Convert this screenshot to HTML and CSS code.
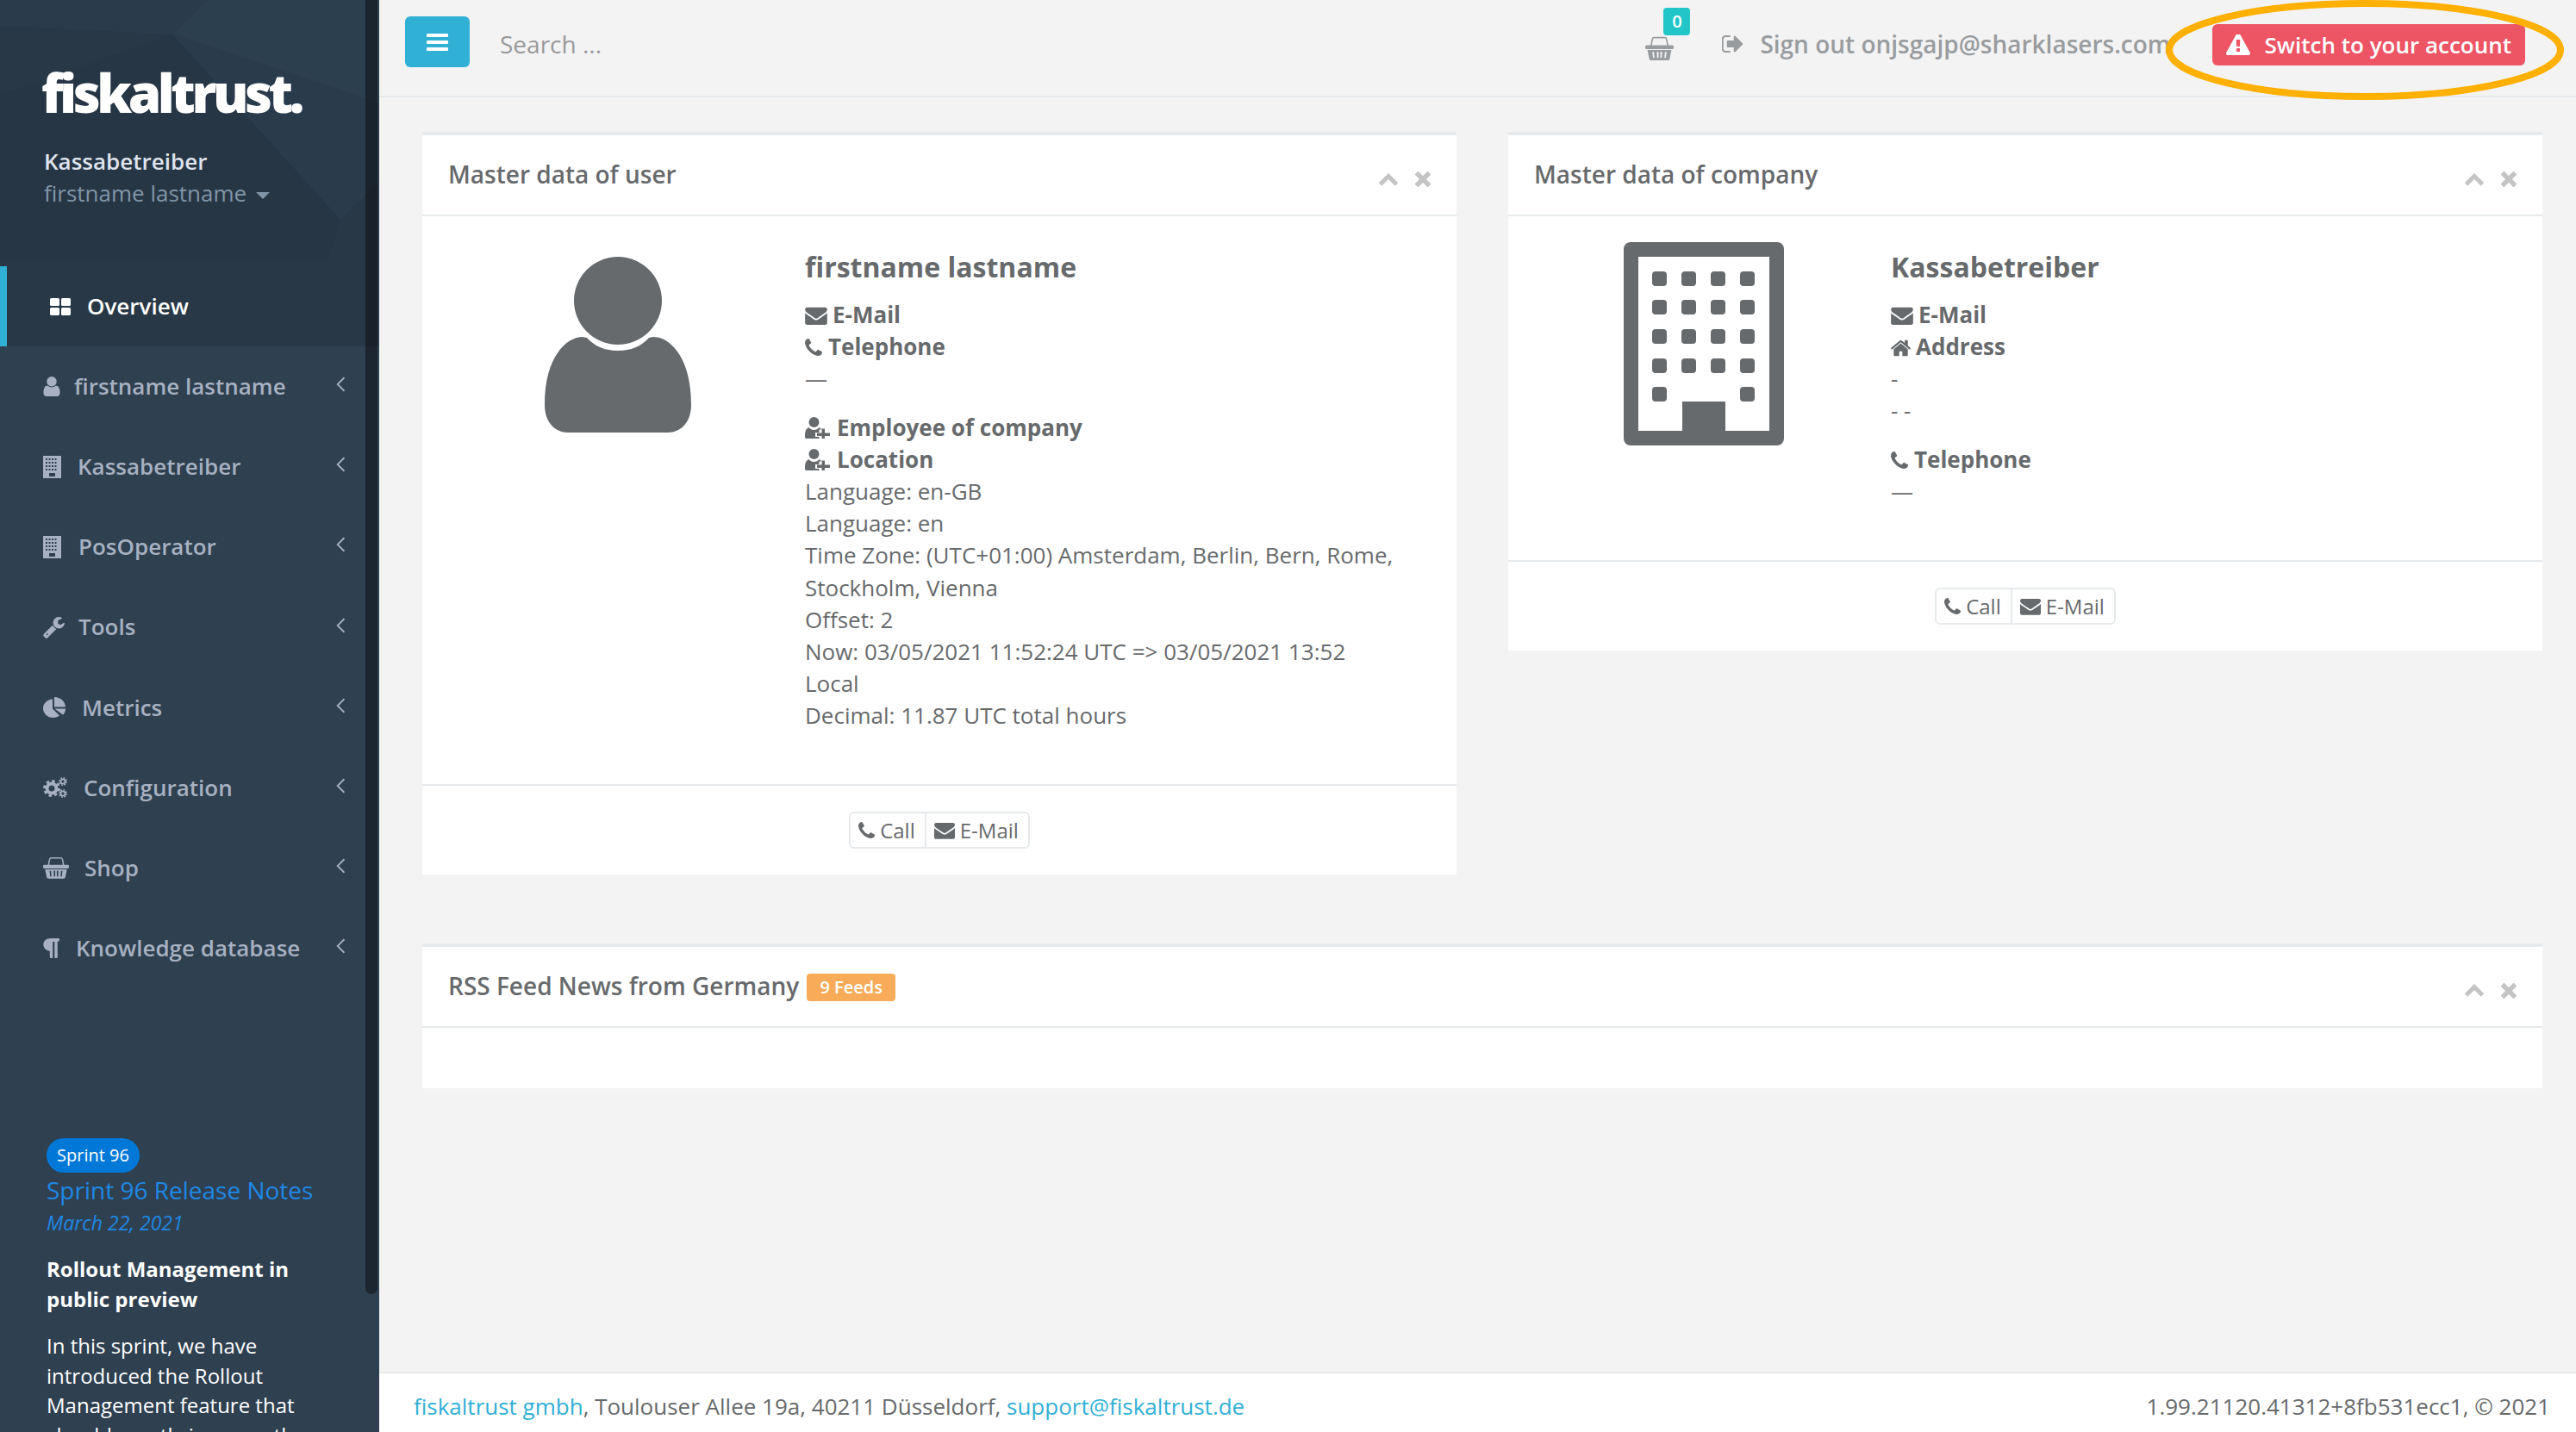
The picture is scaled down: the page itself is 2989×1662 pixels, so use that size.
FILE: index.html
```html
<!DOCTYPE html>
<html lang="en">
<head>
  <meta charset="UTF-8" />
  <title>fiskaltrust portal</title>
  <link rel="stylesheet" href="styles.css">
</head>
<body>
  <svg class="sprite" xmlns="http://www.w3.org/2000/svg">
    <symbol id="i-envelope" viewBox="0 128 1792 1536"><path d="M1792 710v794q0 66-47 113t-113 47h-1472q-66 0-113-47t-47-113v-794q44 49 101 87 362 246 497 345 57 42 92.5 65.5t94.5 48 110 24.5h2q51 0 110-24.5t94.5-48 92.5-65.5q170-123 498-345 57-39 100-87zm0-294q0 79-49 151t-122 123q-376 261-468 325-10 7-42.5 30.5t-54 38-52 32.5-57.5 27-50 9h-2q-23 0-50-9t-57.5-27-52-32.5-54-38-42.5-30.5q-91-64-262-182.5t-205-142.5q-62-42-117-115.5t-55-136.5q0-78 41.5-130t118.5-52h1472q65 0 112.5 47t47.5 113z"/></symbol>
    <symbol id="i-phone" viewBox="192 128 1408 1408"><path d="M1600 1240q0 27-10 70.5t-21 68.5q-21 50-122 106-94 51-186 51-27 0-53-3.5t-57.5-12.5-47-14.5-55.5-20.5-49-18q-98-35-175-83-127-79-264-216t-216-264q-48-77-83-175-3-9-18-49t-20.5-55.5-14.5-47-12.5-57.5-3.5-53q0-92 51-186 56-101 106-122 25-11 68.5-21t70.5-10q14 0 21 3 18 6 53 76 11 19 30 54t35 63.5 31 53.5q3 4 17.5 25t21.5 35.5 7 28.5q0 20-28.5 50t-62 55-62 53-28.5 46q0 9 5 22.5t8.5 20.5 14 24 11.5 19q76 137 174 235t235 174q2 1 19 11.5t24 14 20.5 8.5 22.5 5q18 0 46-28.5t53-62 55-62 50-28.5q14 0 28.5 7t35.5 21.5 25 17.5q25 15 53.5 31t63.5 35 54 30q70 35 76 53 3 7 3 21z"/></symbol>
    <symbol id="i-user" viewBox="256 128 1280 1536"><path d="M1536 1399q0 109-62.5 187t-150.5 78h-854q-88 0-150.5-78t-62.5-187q0-85 8.5-160.5t31.5-152 58.5-131 94-89 134.5-34.5q131 128 313 128t313-128q76 0 134.5 34.5t94 89 58.5 131 31.5 152 8.5 160.5zm-256-887q0 159-112.5 271.5t-271.5 112.5-271.5-112.5-112.5-271.5 112.5-271.5 271.5-112.5 271.5 112.5 112.5 271.5z"/></symbol>
    <symbol id="i-userplus" viewBox="0 0 58 50"><circle cx="21" cy="12" r="12"/><path d="M3 50c-3 0-3-3-3-6 0-10 2-17 9-20 3 4 7 6 12 6s9-2 12-6c2 1 4 3 5 5h-5v7h-9v10h9v4z"/><path d="M39 27h7v10h12v7H46v6h-7v-6H28v-7h11z"/></symbol>
    <symbol id="i-th" viewBox="0 0 24 20"><rect width="11" height="9" rx="1.5"/><rect x="13" width="11" height="9" rx="1.5"/><rect y="11" width="11" height="9" rx="1.5"/><rect x="13" y="11" width="11" height="9" rx="1.5"/></symbol>
    <symbol id="i-building" viewBox="0 0 21 26"><path fill-rule="evenodd" d="M0 0h21v26H0zM3 3v2h2V3zm3.500 0v2h2V3zm3.500 0v2h2V3zm3.500 0v2h2V3zM3 7v2h2V7zm3.500 0v2h2V7zm3.500 0v2h2V7zm3.500 0v2h2V7zM3 11v2h2v-2zm3.500 0v2h2v-2zm3.500 0v2h2v-2zm3.500 0v2h2v-2zM3 15v2h2v-2zm3.500 0v2h2v-2zm3.500 0v2h2v-2zm3.500 0v2h2v-2zM7 20v4h7v-4z"/></symbol>
    <symbol id="i-wrench" viewBox="64 128 1664 1664"><path d="M448 1472q0-26-19-45t-45-19-45 19-19 45 19 45 45 19 45-19 19-45zm644-420l-682 682q-37 37-90 37-52 0-91-37l-106-108q-38-36-38-90 0-53 38-91l681-681q39 98 114.5 173.5t173.5 114.5zm634-435q0 39-23 106-47 134-164.5 217.5t-258.5 83.5q-185 0-316.5-131.5t-131.5-316.5 131.5-316.5 316.5-131.5q58 0 121.5 16.5t107.5 46.5q16 11 16 28t-16 28l-293 169v224l193 107q5-3 79-48.5t135.5-81 70.5-35.5q15 0 23.5 10t8.5 25z"/></symbol>
    <symbol id="i-pie" viewBox="0 0 26 24"><path d="M11 2.500v11l8 8C17 23 14.500 24 11.500 24 5 24 0 19 0 13 0 7.500 5 2.800 11 2.500z"/><path d="M13.500 13.500H26c0 2.800-1 5.200-2.800 7.200z"/><path d="M13 0c7 0 12.600 5 13 11.500H13z"/></symbol>
    <symbol id="i-cogs" viewBox="0 0 28 24">
      <circle cx="10" cy="13" r="5.500" fill="none" stroke="currentColor" stroke-width="4"/>
      <circle cx="10" cy="13" r="8.500" fill="none" stroke="currentColor" stroke-width="3" stroke-dasharray="3.400 3.270"/>
      <circle cx="23" cy="5" r="2.600" fill="none" stroke="currentColor" stroke-width="1.800"/>
      <circle cx="23" cy="5" r="4.200" fill="none" stroke="currentColor" stroke-width="1.500" stroke-dasharray="1.700 1.600"/>
      <circle cx="23" cy="19" r="2.600" fill="none" stroke="currentColor" stroke-width="1.800"/>
      <circle cx="23" cy="19" r="4.200" fill="none" stroke="currentColor" stroke-width="1.500" stroke-dasharray="1.700 1.600"/>
    </symbol>
    <symbol id="i-basket" viewBox="0 0 32 27">
      <path d="M6.500 11 8 3.500Q8.300 1.500 10 1.500h12q1.700 0 2 2L25.500 11" fill="none" stroke="currentColor" stroke-width="1.600"/>
      <rect y="10" width="32" height="4.500" rx="1.500"/>
      <path fill-rule="evenodd" d="M2.500 15.500h27l-2 10q-.3 1.500-2 1.500h-19q-1.700 0-2-1.500zM8 17.500l.8 7h1.600l-.6-7zm5 0 .4 7H15v-7zm4 0v7h1.600l.4-7zm5.200 0-.6 7h1.600l.8-7z"/>
    </symbol>
    <symbol id="i-para" viewBox="256 128 1280 1536"><path d="M1534 189v73q0 29-18.500 61t-42.500 32q-50 0-54 1-26 6-32 31-3 11-3 64v1152q0 25-18 43t-43 18h-108q-25 0-43-18t-18-43v-1218h-143v1218q0 25-17.500 43t-43.500 18h-108q-26 0-43.500-18t-17.500-43v-496q-147-12-245-59-126-58-192-179-64-117-64-259 0-166 88-286 88-118 209-159 111-37 417-37h479q25 0 43 18t18 43z"/></symbol>
    <symbol id="i-home" viewBox="90 256 1610 1280"><path d="M1472 992v480q0 26-19 45t-45 19h-384v-384h-256v384h-384q-26 0-45-19t-19-45v-480q0-1 .5-3t.5-3l575-474 575 474q1 2 1 6zm223-69l-62 74q-8 9-21 11h-3q-13 0-21-7l-692-577-692 577q-12 8-24 7-13-2-21-11l-62-74q-8-10-7-23.500t11-21.500l719-599q32-26 76-26t76 26l244 204v-195q0-14 9-23t23-9h192q14 0 23 9t9 23v408l219 182q10 8 11 21.500t-7 23.500z"/></symbol>
    <symbol id="i-signout" viewBox="128 256 1504 1280"><path d="M704 1440q0 4 1 20t.5 26.500-3 23.500-10 19.500-20.500 6.500h-320q-119 0-203.500-84.500t-84.500-203.500v-704q0-119 84.500-203.500t203.500-84.500h320q13 0 22.500 9.500t9.500 22.500q0 4 1 20t.5 26.500-3 23.500-10 19.500-20.500 6.500h-320q-66 0-113 47t-47 113v704q0 66 47 113t113 47h312l11.500 1 11.500 3 8 5.500 7 9 2 13.500zm928-544q0 26-19 45l-544 544q-19 19-45 19t-45-19-19-45v-288h-448q-26 0-45-19t-19-45v-384q0-26 19-45t45-19h448v-288q0-26 19-45t45-19 45 19l544 544q19 19 19 45z"/></symbol>
    <symbol id="i-warning" viewBox="0 0 1792 1536"><path transform="translate(0 -128)" d="M1024 1375v-190q0-14-9.500-23.500t-22.500-9.500h-192q-13 0-22.500 9.500t-9.500 23.500v190q0 14 9.500 23.500t22.500 9.500h192q13 0 22.500-9.500t9.500-23.500zm-2-374l18-459q0-12-10-19-13-11-24-11h-220q-11 0-24 11-10 7-10 21l17 457q0 10 10 16.500t24 6.500h185q14 0 23.500-6.500t10.500-16.500zm-14-934l768 1408q35 63-2 126-17 29-46.500 46t-63.500 17h-1536q-34 0-63.500-17t-46.500-46q-37-63-2-126l768-1408q17-31 47-49t65-18 65 18 47 49z"/></symbol>
    <symbol id="i-angle" viewBox="0 0 9 16"><path d="M8.500 1 1.500 8l7 7" fill="none" stroke="currentColor" stroke-width="1.600"/></symbol>
    <symbol id="i-up" viewBox="0 0 24 15"><path d="M2.500 13 12 3.500l9.500 9.500" fill="none" stroke="currentColor" stroke-width="5"/></symbol>
    <symbol id="i-times" viewBox="0 0 18 18"><path d="M1.500 1.500l15 15m0-15l-15 15" fill="none" stroke="currentColor" stroke-width="5.500"/></symbol>
  </svg>

  <div class="app">
    <aside class="sidebar">
      <div class="profile">
        <svg class="profile-bg" viewBox="0 0 440 303" preserveAspectRatio="none" aria-hidden="true">
          <polygon points="200,40 240,0 440,0 440,120" fill="#2c3f4f"/>
          <polygon points="200,40 395,255 440,210 440,120" fill="#2a3b4b"/>
          <polygon points="0,110 200,40 395,255 380,303 0,303" fill="#273645"/>
          <polygon points="0,0 240,0 200,40 0,30" fill="#2a3b4b"/>
        </svg>
        <div class="logo">fiskaltrust.</div>
        <div class="profile-name">Kassabetreiber</div>
        <div class="profile-user">firstname lastname <span class="caret"></span></div>
      </div>

      <ul class="nav">
        <li class="nav-item active"><svg class="nav-icon" width="24" height="20"><use href="#i-th"/></svg>Overview</li>
        <li class="nav-item"><svg class="nav-icon" width="20" height="23"><use href="#i-user"/></svg>firstname lastname<svg class="nav-arrow" width="10" height="18"><use href="#i-angle"/></svg></li>
        <li class="nav-item"><svg class="nav-icon" width="21" height="26"><use href="#i-building"/></svg><span class="t-b">Kassabetreiber</span><svg class="nav-arrow" width="10" height="18"><use href="#i-angle"/></svg></li>
        <li class="nav-item"><svg class="nav-icon" width="21" height="26"><use href="#i-building"/></svg><span class="t-p">PosOperator</span><svg class="nav-arrow" width="10" height="18"><use href="#i-angle"/></svg></li>
        <li class="nav-item"><svg class="nav-icon" width="25" height="25"><use href="#i-wrench"/></svg>Tools<svg class="nav-arrow" width="10" height="18"><use href="#i-angle"/></svg></li>
        <li class="nav-item"><svg class="nav-icon" width="26" height="24"><use href="#i-pie"/></svg><span class="t-m">Metrics</span><svg class="nav-arrow" width="10" height="18"><use href="#i-angle"/></svg></li>
        <li class="nav-item"><svg class="nav-icon" width="28" height="24"><use href="#i-cogs"/></svg><span class="t-c">Configuration</span><svg class="nav-arrow" width="10" height="18"><use href="#i-angle"/></svg></li>
        <li class="nav-item"><svg class="nav-icon" width="30" height="26"><use href="#i-basket"/></svg><span class="t-s">Shop</span><svg class="nav-arrow" width="10" height="18"><use href="#i-angle"/></svg></li>
        <li class="nav-item"><svg class="nav-icon" width="19" height="23"><use href="#i-para"/></svg><span class="t-k">Knowledge database</span><svg class="nav-arrow" width="10" height="18"><use href="#i-angle"/></svg></li>
      </ul>

      <section class="news">
        <span class="news-tag">Sprint 96</span>
        <a class="news-title">Sprint 96 Release Notes</a>
        <div class="news-date">March 22, 2021</div>
        <h4 class="news-head">Rollout Management in public preview</h4>
        <p class="news-text">In this sprint, we have introduced the Rollout Management feature that should greatly improve the</p>
      </section>

      <div class="scroll-thumb"></div>
    </aside>

    <div class="page">
      <header class="topbar">
        <button class="menu-btn" type="button"><span></span><span></span><span></span></button>
        <div class="search">Search ...</div>
        <div class="top-links">
          <div class="cart">
            <svg width="33" height="28"><use href="#i-basket"/></svg>
            <span class="cart-count">0</span>
          </div>
          <a class="sign-out"><svg width="25" height="20"><use href="#i-signout"/></svg>Sign out onjsgajp@sharklasers.com</a>
          <button class="switch-btn" type="button"><svg width="28" height="24"><use href="#i-warning"/></svg>Switch to your account</button>
        </div>
        <svg class="highlight" width="464" height="118" aria-hidden="true"><ellipse cx="232" cy="59" rx="227" ry="54" fill="none" stroke="#ffb000" stroke-width="8"/></svg>
      </header>

      <main class="content">
        <div class="row">
          <section class="ibox">
            <div class="ibox-title">
              <h5>Master data of user</h5>
              <div class="ibox-tools">
                <svg width="24" height="15"><use href="#i-up"/></svg>
                <svg width="18" height="18"><use href="#i-times"/></svg>
              </div>
            </div>
            <div class="ibox-content">
              <div class="figure">
                <svg class="avatar" viewBox="0 0 170 204" width="170" height="204">
                  <ellipse cx="85" cy="51" rx="51" ry="51"/>
                  <path d="M44 93C26 93 0 115 0 172c0 20 12 32 27 32h116c15 0 27-12 27-32 0-57-26-79-44-79l-5 1c-9 10-21 15-36 15s-27-5-36-15z"/>
                </svg>
              </div>
              <div class="details">
                <h3>firstname lastname</h3>
                <p>
                  <b><svg class="ic" width="26" height="22"><use href="#i-envelope"/></svg>E-Mail</b><br>
                  <b><svg class="ic ic-phone" width="20" height="20"><use href="#i-phone"/></svg>Telephone</b><br>
                  —
                </p>
                <p>
                  <b><svg class="ic ic-plus" width="29" height="25"><use href="#i-userplus"/></svg>Employee of company</b><br>
                  <b><svg class="ic ic-plus" width="29" height="25"><use href="#i-userplus"/></svg>Location</b><br>
                  Language: en-GB<br>
                  Language: en<br>
                  Time Zone: (UTC+01:00) Amsterdam, Berlin, Bern, Rome, Stockholm, Vienna<br>
                  Offset: 2<br>
                  Now: 03/05/2021 11:52:24 UTC =&gt; 03/05/2021 13:52 Local<br>
                  Decimal: 11.87 UTC total hours
                </p>
              </div>
            </div>
            <div class="ibox-footer">
              <div class="btn-group">
                <a class="btn"><svg width="19" height="19"><use href="#i-phone"/></svg>Call</a>
                <a class="btn"><svg width="24" height="21"><use href="#i-envelope"/></svg>E-Mail</a>
              </div>
            </div>
          </section>

          <section class="ibox">
            <div class="ibox-title">
              <h5>Master data of company</h5>
              <div class="ibox-tools">
                <svg width="24" height="15"><use href="#i-up"/></svg>
                <svg width="18" height="18"><use href="#i-times"/></svg>
              </div>
            </div>
            <div class="ibox-content">
              <div class="figure">
                <svg class="office" viewBox="0 0 186 236" width="186" height="236">
                  <path fill-rule="evenodd" d="M8 0h170a8 8 0 0 1 8 8v220a8 8 0 0 1-8 8H8a8 8 0 0 1-8-8V8a8 8 0 0 1 8-8zM17 17v202h51v-34h50v34h51V17z"/>
                  <rect x="33" y="34" width="17" height="17" rx="4"/><rect x="67" y="34" width="17" height="17" rx="4"/><rect x="101" y="34" width="17" height="17" rx="4"/><rect x="135" y="34" width="17" height="17" rx="4"/>
                  <rect x="33" y="67" width="17" height="17" rx="4"/><rect x="67" y="67" width="17" height="17" rx="4"/><rect x="101" y="67" width="17" height="17" rx="4"/><rect x="135" y="67" width="17" height="17" rx="4"/>
                  <rect x="33" y="101" width="17" height="17" rx="4"/><rect x="67" y="101" width="17" height="17" rx="4"/><rect x="101" y="101" width="17" height="17" rx="4"/><rect x="135" y="101" width="17" height="17" rx="4"/>
                  <rect x="33" y="135" width="17" height="17" rx="4"/><rect x="67" y="135" width="17" height="17" rx="4"/><rect x="101" y="135" width="17" height="17" rx="4"/><rect x="135" y="135" width="17" height="17" rx="4"/>
                  <rect x="33" y="168" width="17" height="17" rx="4"/><rect x="135" y="168" width="17" height="17" rx="4"/>
                </svg>
              </div>
              <div class="details">
                <h3>Kassabetreiber</h3>
                <p>
                  <b><svg class="ic" width="26" height="22"><use href="#i-envelope"/></svg>E-Mail</b><br>
                  <b><svg class="ic" width="23" height="20"><use href="#i-home"/></svg>Address</b><br>
                  -<br>
                  - -
                </p>
                <p>
                  <b><svg class="ic ic-phone" width="20" height="20"><use href="#i-phone"/></svg>Telephone</b><br>
                  —
                </p>
              </div>
            </div>
            <div class="ibox-footer">
              <div class="btn-group">
                <a class="btn"><svg width="19" height="19"><use href="#i-phone"/></svg>Call</a>
                <a class="btn"><svg width="24" height="21"><use href="#i-envelope"/></svg>E-Mail</a>
              </div>
            </div>
          </section>
        </div>

        <section class="ibox ibox-wide">
          <div class="ibox-title">
            <h5>RSS Feed News from Germany <span class="label-warning">9 Feeds</span></h5>
            <div class="ibox-tools">
              <svg width="24" height="15"><use href="#i-up"/></svg>
              <svg width="18" height="18"><use href="#i-times"/></svg>
            </div>
          </div>
          <div class="ibox-content ibox-empty"></div>
        </section>
      </main>

      <footer class="footer">
        <div><a>fiskaltrust gmbh</a>, Toulouser Allee 19a, 40211 Düsseldorf, <a>support@fiskaltrust.de</a></div>
        <div>1.99.21120.41312+8fb531ecc1, © 2021</div>
      </footer>
    </div>
  </div>
</body>
</html>
```

FILE: styles.css
```css
* {
  box-sizing: border-box;
}
html, body {
  margin: 0;
  padding: 0;
  height: 100%;
}
body {
  font-family: "Open Sans", "Liberation Sans", sans-serif;
  font-size: 26px;
  line-height: 1.42857;
  color: #676a6c;
  background-color: #f3f3f4;
  overflow: hidden;
}
svg {
  fill: currentColor;
}
.sprite {
  display: none;
}
.app {
  display: flex;
  height: 1662px;
}

/* sidebar */
.sidebar {
  position: relative;
  flex: 0 0 440px;
  background-color: #2f4050;
  overflow: hidden;
}
.profile {
  position: relative;
  height: 309px;
  padding: 74px 0 0 51px;
  background-color: #293846;
}
.profile-bg {
  position: absolute;
  top: 0;
  left: 0;
  width: 440px;
  height: 303px;
}
.logo, .profile-name, .profile-user {
  position: relative;
}
.logo {
  margin-left: -3px;
  font-size: 62px;
  font-weight: 800;
  line-height: 66px;
  letter-spacing: -4.5px;
  color: #fff;
}
.profile-name {
  margin-top: 29px;
  font-weight: 600;
  color: #dfe4ed;
}
.profile-user {
  color: #8095a8;
}
.caret {
  display: inline-block;
  margin-left: 4px;
  vertical-align: middle;
  border-top: 8px solid #8095a8;
  border-left: 8px solid transparent;
  border-right: 8px solid transparent;
}
.nav {
  list-style: none;
  margin: 0;
  padding: 0;
}
.nav-item {
  display: flex;
  align-items: center;
  height: 93.14px;
  padding: 0 40px 0 50px;
  font-weight: 600;
  color: #a7b1c2;
}
.nav-icon {
  flex: none;
  margin-right: 16px;
}
.nav-arrow {
  flex: none;
  margin-left: auto;
  margin-top: -5px;
}
.nav-item.active {
  background-color: #293846;
  border-left: 8px solid #31b0d5;
  color: #fff;
}
.nav-item.active .nav-icon {
  margin-right: 19px;
}
.t-b {
  margin-left: 3px;
}
.t-p {
  margin-left: 4px;
}
.t-m {
  margin-left: 3px;
}
.t-c {
  margin-left: 3px;
}
.t-s {
  margin-left: 2px;
}
.t-k {
  margin-left: 3px;
}
.news {
  margin-top: 174px;
  padding: 0 70px 0 54px;
  font-size: 24px;
  color: #fff;
}
.news-tag {
  display: block;
  width: 108px;
  height: 40px;
  border-radius: 20px;
  background-color: #0078d7;
  font-size: 20px;
  line-height: 40px;
  text-align: center;
}
.news-title {
  display: block;
  margin-top: 0;
  font-size: 28px;
  line-height: 40px;
  color: #1e88e5;
  white-space: nowrap;
}
.news-date {
  font-size: 23px;
  font-style: italic;
  line-height: 36px;
  color: #1e88e5;
}
.news-head {
  margin: 18px 0 0;
  font-size: 24px;
  font-weight: 700;
  line-height: 35px;
}
.news-text {
  margin: 20px 0 0;
  line-height: 34.5px;
}
.scroll-thumb {
  position: absolute;
  top: 0;
  right: 2px;
  width: 14px;
  height: 1502px;
  border-radius: 0 0 7px 7px;
  background-color: rgba(0, 0, 0, 0.4);
}

/* top bar */
.page {
  flex: 1;
  display: flex;
  flex-direction: column;
  min-width: 0;
}
.topbar {
  position: relative;
  display: flex;
  align-items: center;
  flex: none;
  height: 113px;
  padding: 0 59px 8px 30px;
  border-bottom: 2px solid #e7eaec;
}
.menu-btn {
  display: flex;
  flex-direction: column;
  justify-content: center;
  gap: 4px;
  width: 75px;
  height: 59px;
  margin-bottom: 6px;
  padding: 0 25px;
  border: none;
  border-radius: 6px;
  background-color: #31b0d5;
}
.menu-btn span {
  display: block;
  height: 4px;
  border-radius: 1px;
  background-color: #fff;
}
.search {
  margin-left: 35px;
  font-size: 28px;
  color: #999;
}
.top-links {
  display: flex;
  align-items: center;
  margin-left: auto;
}
.cart {
  position: relative;
  display: flex;
  margin-top: 8px;
  color: #999c9e;
}
.cart-count {
  position: absolute;
  top: -33px;
  left: 21px;
  width: 31px;
  height: 32px;
  border-radius: 4px;
  background-color: #23c6c8;
  color: #fff;
  font-size: 20px;
  font-weight: 600;
  line-height: 32px;
  text-align: center;
}
.sign-out {
  display: flex;
  align-items: center;
  margin-left: 56px;
  font-size: 28px;
  font-weight: 600;
  color: #999c9e;
}
.sign-out svg {
  margin-right: 19px;
}
.switch-btn {
  display: flex;
  align-items: center;
  height: 48px;
  margin-left: 48px;
  padding: 0 16px;
  border: none;
  border-radius: 6px;
  background-color: #ed5565;
  color: #fff;
  font: 600 26px "Open Sans", sans-serif;
}
.switch-btn svg {
  margin-right: 17px;
}
.highlight {
  position: absolute;
  top: -1px;
  right: 13px;
}

/* boxes */
.content {
  flex: 1;
  padding: 40px 39px 0 50px;
}
.row {
  display: grid;
  grid-template-columns: 1200px 1200px;
  gap: 60px;
  align-items: start;
}
.ibox {
  background-color: #fff;
  border-top: 4px solid #e7eaec;
}
.ibox-wide {
  margin-top: 80px;
}
.ibox-title {
  display: flex;
  align-items: center;
  height: 94px;
  padding: 0 30px;
  border-bottom: 2px solid #e7eaec;
}
.ibox-title h5 {
  margin: 0;
  font-size: 28px;
  font-weight: 600;
}
.ibox-tools {
  display: flex;
  align-items: center;
  gap: 19px;
  margin-left: auto;
  padding-top: 10px;
  color: #c4c4c4;
}
.label-warning {
  display: inline-block;
  margin-left: 2px;
  padding: 0 15px;
  height: 32px;
  border-radius: 4px;
  background-color: #f8ac59;
  color: #fff;
  font-size: 20px;
  font-weight: 600;
  line-height: 32px;
  vertical-align: 2px;
}
.ibox-content {
  display: flex;
  padding: 30px 30px 40.5px;
}
.ibox-empty {
  height: 70px;
}
.figure {
  flex: 0 0 414px;
  padding-right: 20px;
  display: flex;
  justify-content: center;
  align-items: flex-start;
}
.avatar {
  margin-top: 17px;
  fill: #676a6c;
}
.office {
  fill: #676a6c;
}
.details {
  flex: 1;
  padding-right: 30px;
}
.details h3 {
  margin: 11px 0 19.5px;
  font-size: 32px;
  font-weight: 700;
  line-height: 35px;
}
.details p {
  margin: 0 0 20px;
}
.details b {
  font-weight: 700;
}
.ic {
  margin-right: 6px;
  vertical-align: -2px;
}
.ic-phone {
  margin-right: 7px;
  vertical-align: -1px;
}
.ic-plus {
  margin-right: 8px;
  vertical-align: -3px;
}
.ibox-footer {
  padding: 30px;
  border-top: 2px solid #e7eaec;
  text-align: center;
}
.btn-group {
  display: inline-flex;
  height: 43px;
  border: 2px solid #e7eaec;
  border-radius: 6px;
  font-size: 24px;
  line-height: 39px;
}
.btn {
  display: flex;
  align-items: center;
  gap: 6px;
  padding: 0 11px 0 9px;
}
.btn + .btn {
  border-left: 2px solid #e7eaec;
}

/* footer */
.footer {
  display: flex;
  justify-content: space-between;
  flex: none;
  height: 70px;
  padding: 20px 30px 0 40px;
  border-top: 2px solid #e7eaec;
  background-color: #fff;
}
.footer a {
  color: #31b0d5;
}
```
